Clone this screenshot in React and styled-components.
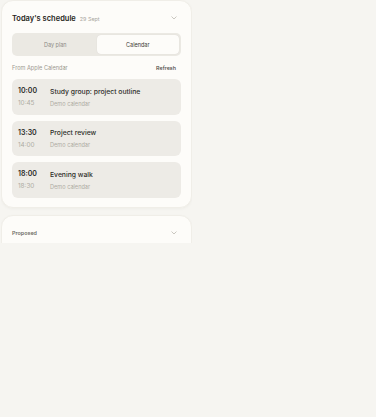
import styled, { createGlobalStyle } from 'styled-components'

const GlobalStyle = createGlobalStyle`
  html, body {
    margin: 0;
    padding: 0;
    background: #f6f5f1;
    font-family: Inter, "Noto Sans", sans-serif;
    color: #2b2a27;
  }
`

const events = [
  { start: '10:00', end: '10:45', title: 'Study group: project outline', cal: 'Demo calendar' },
  { start: '13:30', end: '14:00', title: 'Project review', cal: 'Demo calendar' },
  { start: '18:00', end: '18:30', title: 'Evening walk', cal: 'Demo calendar' },
]

const Chevron = () => (
  <svg width="6" height="4" viewBox="0 0 6 4" fill="none">
    <path d="M0.8 0.8 L3 3 L5.2 0.8" stroke="#bcb9b1" strokeWidth="0.8" strokeLinecap="round" strokeLinejoin="round" />
  </svg>
)

const App = () => {
  return (
    <>
      <GlobalStyle />
      <Column>
        <Card>
          <Header>
            <TitleWrap>
              <Title>Today's schedule</Title>
              <DateText>29 Sept</DateText>
            </TitleWrap>
            <Chevron />
          </Header>
          <Segmented>
            <Segment>Day plan</Segment>
            <Segment $active>Calendar</Segment>
          </Segmented>
          <SourceRow>
            <Source>From Apple Calendar</Source>
            <Refresh>Refresh</Refresh>
          </SourceRow>
          <EventList>
            {events.map((e) => (
              <EventRow key={e.start}>
                <Times>
                  <Start>{e.start}</Start>
                  <End>{e.end}</End>
                </Times>
                <Info>
                  <EventTitle>{e.title}</EventTitle>
                  <CalName>{e.cal}</CalName>
                </Info>
              </EventRow>
            ))}
          </EventList>
        </Card>
        <Card $collapsed>
          <Header>
            <SectionLabel>Proposed</SectionLabel>
            <Chevron />
          </Header>
        </Card>
      </Column>
    </>
  )
}

export default App

const Column = styled.div`
  width: 191px;
  margin-left: 1px;
  height: 243px;
  overflow: hidden;
  display: flex;
  flex-direction: column;
  gap: 7px;
`

const Card = styled.section`
  background: #fdfcf9;
  border: 1px solid #f0eee8;
  border-radius: 12px;
  padding: ${(p) => (p.$collapsed ? '9px 10px 20px' : '9px 10px 9px')};
  box-shadow: 0 1px 3px rgba(60, 50, 30, 0.04);
  flex-shrink: 0;
`

const Header = styled.div`
  display: flex;
  align-items: center;
  justify-content: space-between;
  height: 16px;
  padding-right: 4px;
`

const TitleWrap = styled.div`
  display: flex;
  align-items: baseline;
  gap: 4px;
`

const Title = styled.h2`
  margin: 0;
  font-size: 7.5px;
  font-weight: 600;
  color: #272622;
`

const DateText = styled.span`
  font-size: 5.4px;
  color: #a9a69e;
`

const SectionLabel = styled.span`
  font-size: 5.4px;
  font-weight: 600;
  color: #6f6c66;
`

const Segmented = styled.div`
  margin-top: 7px;
  display: grid;
  grid-template-columns: 1fr 1fr;
  background: #ebe9e3;
  border-radius: 5px;
  padding: 2px;
  height: 23px;
  box-sizing: border-box;
`

const Segment = styled.div`
  display: flex;
  align-items: center;
  justify-content: center;
  font-size: 5.5px;
  border-radius: 4px;
  color: ${(p) => (p.$active ? '#3a3934' : '#8d8a83')};
  background: ${(p) => (p.$active ? '#fdfcf9' : 'transparent')};
  box-shadow: ${(p) => (p.$active ? '0 0 1px rgba(0,0,0,0.12)' : 'none')};
`

const SourceRow = styled.div`
  margin-top: 7px;
  height: 10px;
  display: flex;
  align-items: center;
  justify-content: space-between;
  padding-right: 5px;
`

const Source = styled.span`
  font-size: 5.6px;
  color: #9c998f;
`

const Refresh = styled.span`
  font-size: 5.4px;
  font-weight: 500;
  color: #4a4843;
`

const EventList = styled.div`
  margin-top: 6px;
  display: flex;
  flex-direction: column;
  gap: 6px;
`

const EventRow = styled.div`
  display: flex;
  align-items: center;
  gap: 13px;
  height: 35.5px;
  box-sizing: border-box;
  padding: 0 6px;
  background: #edebe6;
  border-radius: 6px;
`

const Times = styled.div`
  display: flex;
  flex-direction: column;
  gap: 4px;
  width: 19px;
`

const Start = styled.span`
  font-size: 7px;
  font-weight: 600;
  color: #2b2a26;
`

const End = styled.span`
  font-size: 6.4px;
  color: #aeaba3;
`

const Info = styled.div`
  display: flex;
  flex-direction: column;
  gap: 5px;
`

const EventTitle = styled.span`
  font-size: 6.8px;
  font-weight: 500;
  color: #2e2d29;
`

const CalName = styled.span`
  font-size: 5.6px;
  color: #aeaba3;
`
